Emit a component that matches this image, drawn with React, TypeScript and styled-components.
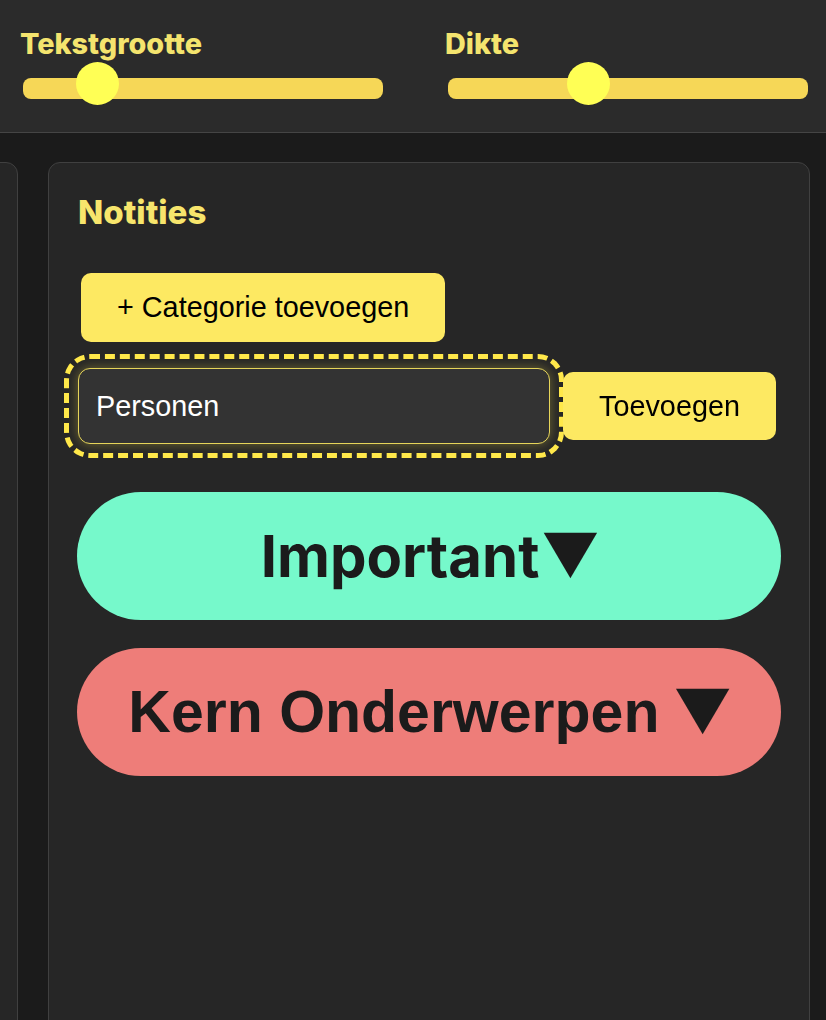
import React, { useState } from 'react';
import styled, { createGlobalStyle } from 'styled-components';

const GlobalStyle = createGlobalStyle`
  html, body {
    margin: 0;
    padding: 0;
    background-color: #1b1b1b;
    font-family: "Liberation Sans", Arial, sans-serif;
  }
  * {
    box-sizing: border-box;
  }
`;

interface SliderProps {
  label: string;
  value: number;
  min: number;
  max: number;
}

function Slider({ label, value, min, max }: SliderProps) {
  const ratio = (value - min) / (max - min);
  return (
    <StyledControl>
      <StyledLabel>{label}</StyledLabel>
      <StyledTrack>
        <StyledThumb style={{ left: `${ratio * (360 - 43)}px` }} />
      </StyledTrack>
    </StyledControl>
  );
}

const categories = [
  { name: 'Important', color: '#76f9cb', font: 'inter', spaced: false },
  { name: 'Kern Onderwerpen', color: '#ee7d79', font: 'arial', spaced: true },
];

export default function App() {
  const [newCategory, setNewCategory] = useState('Personen');

  return (
    <>
      <GlobalStyle />
      <StyledHeader>
        <Slider label="Tekstgrootte" value={18} min={12} max={48} />
        <Slider label="Dikte" value={400} min={100} max={900} />
      </StyledHeader>

      <StyledBoard>
        <StyledPanel />
        <StyledPanel>
          <StyledTitle>Notities</StyledTitle>
          <StyledAddButton>+ Categorie toevoegen</StyledAddButton>
          <StyledForm onSubmit={(e) => e.preventDefault()}>
            <StyledInput
              autoFocus
              value={newCategory}
              onChange={(e) => setNewCategory(e.target.value)}
            />
            <StyledSubmitButton type="submit">Toevoegen</StyledSubmitButton>
          </StyledForm>
          <StyledCategoryList>
            {categories.map((category) => (
              <StyledCategory key={category.name} color={category.color} $font={category.font}>
                {category.name}
                {category.spaced ? ' ' : ''}
                <StyledArrow $spaced={category.spaced}>▼</StyledArrow>
              </StyledCategory>
            ))}
          </StyledCategoryList>
        </StyledPanel>
      </StyledBoard>
    </>
  );
}

const StyledHeader = styled.header`
  height: 133px;
  background-color: #2b2b2b;
  border-bottom: 1px solid #454545;
  padding: 27px 18px 0 20px;
  display: flex;
  justify-content: space-between;
`;

const StyledControl = styled.div`
  width: 363px;
  display: flex;
  flex-direction: column;
`;

const StyledLabel = styled.label`
  font-family: Inter, "Noto Sans", sans-serif;
  font-weight: 800;
  font-size: 28.8px;
  line-height: 34px;
  color: #f4e46e;
`;

const StyledTrack = styled.div`
  position: relative;
  margin: 17px 0 0 3px;
  width: 360px;
  height: 21px;
  border-radius: 8px;
  background-color: #f6d757;
`;

const StyledThumb = styled.div`
  position: absolute;
  top: -16px;
  width: 43px;
  height: 43px;
  border-radius: 50%;
  background-color: #ffff55;
`;

const StyledBoard = styled.main`
  display: flex;
  justify-content: flex-end;
  gap: 30px;
  padding: 29px 16px 0 0;
  overflow: hidden;
`;

const StyledPanel = styled.section`
  flex: 0 0 762px;
  min-height: 900px;
  background-color: #262626;
  border: 1px solid #404040;
  border-radius: 12px;
  padding: 29px 29px;
  display: flex;
  flex-direction: column;
  align-items: flex-start;
`;

const StyledTitle = styled.h2`
  margin: 0;
  font-family: Inter, "Noto Sans", sans-serif;
  font-weight: 800;
  font-size: 33px;
  line-height: 41px;
  color: #f7e56c;
`;

const buttonStyles = `
  font-family: "Liberation Sans", Arial, sans-serif;
  font-size: 28.8px;
  color: #000;
  background-color: #fde962;
  border: none;
  border-radius: 10px;
  cursor: pointer;
`;

const StyledAddButton = styled.button`
  ${buttonStyles}
  margin: 40px 0 0 3px;
  height: 69px;
  padding: 0 36px;
`;

const StyledForm = styled.form`
  margin-top: 26px;
  display: flex;
  align-items: center;
  gap: 13px;
`;

const StyledInput = styled.input`
  width: 472px;
  height: 76px;
  padding: 0 17px;
  font-family: "Liberation Sans", Arial, sans-serif;
  font-size: 28.8px;
  color: #fff;
  caret-color: #fff;
  background-color: #333;
  border: 1px solid #e6d55a;
  border-radius: 12px;
  outline: 5px dashed #ffe84a;
  outline-offset: 9px;
  box-shadow: 0 0 12px rgba(255, 232, 74, 0.35);
`;

const StyledSubmitButton = styled.button`
  ${buttonStyles}
  height: 68px;
  width: 213px;
  padding: 0;
`;

const StyledCategoryList = styled.div`
  align-self: stretch;
  margin: 48px -1px 0;
  display: flex;
  flex-direction: column;
  gap: 28px;
`;

interface StyledCategoryProps {
  color: string;
  $font: string;
}

const StyledCategory = styled.div<StyledCategoryProps>`
  height: 128px;
  border-radius: 64px;
  background-color: ${({ color }) => color};
  color: #1b1b1b;
  font-family: ${({ $font }) => $font === 'inter' ? 'Inter, "Noto Sans", sans-serif' : '"Liberation Sans", Arial, sans-serif'};
  font-weight: 700;
  font-size: ${({ $font }) => $font === 'inter' ? '58px' : '59px'};
  display: flex;
  align-items: center;
  justify-content: center;
  white-space: pre;
`;

const StyledArrow = styled.span<{ $spaced: boolean }>`
  display: inline-block;
  font-family: "DejaVu Sans", sans-serif;
  font-size: 70px;
  line-height: 1;
  margin-left: ${({ $spaced }) => $spaced ? '0' : '4px'};
  transform: translateY(-5px) scaleY(0.85);
`;
